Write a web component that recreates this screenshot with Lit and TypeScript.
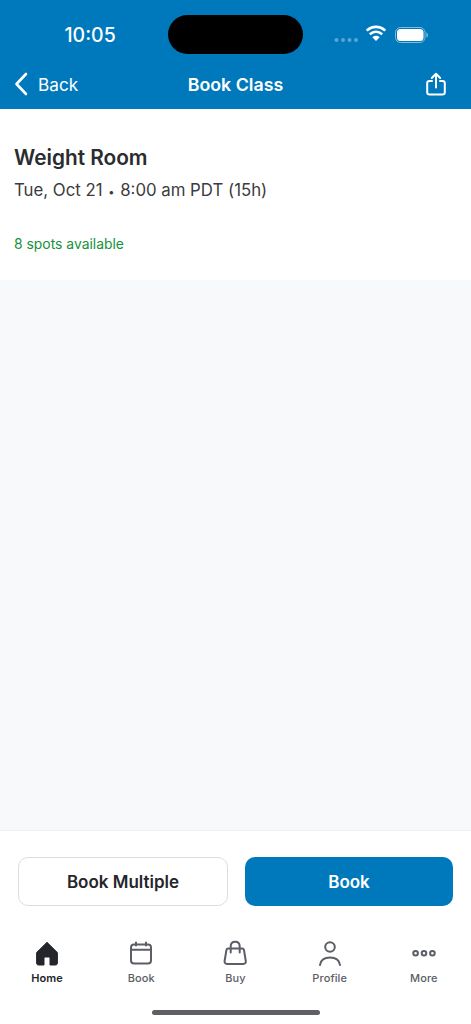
import { LitElement, css, html, svg } from 'lit'
import { customElement } from 'lit/decorators.js'
import { map } from 'lit/directives/map.js'
import { classMap } from 'lit/directives/class-map.js'

const tabs = [
    {
        label: 'Home',
        active: true,
        icon: svg`<path fill="#24262b" stroke="#24262b" stroke-width="1" stroke-linejoin="round" d="M13 2.300 2.600 12.600V23c0 1.300.7 2 2 2H10v-7c0-.7.4-1 1-1h4c.6 0 1 .3 1 1v7h5.400c1.300 0 2-.7 2-2V12.600z"/>`,
    },
    {
        label: 'Book',
        active: false,
        icon: svg`<g fill="none" stroke="#5b5e66" stroke-width="2" stroke-linecap="round"><rect x="3" y="4.500" width="20" height="19" rx="3"/><path d="M3 9.800h20M8 2.500v3M18 2.500v3"/></g>`,
    },
    {
        label: 'Buy',
        active: false,
        icon: svg`<g fill="none" stroke="#5b5e66" stroke-width="2" stroke-linejoin="round" stroke-linecap="round"><path d="M6.200 8.600h14c1 0 1.600.6 1.800 1.600l1.800 10.800c.3 1.900-.8 3-2.400 3H5c-1.600 0-2.700-1.100-2.400-3l1.800-10.800c.2-1 .8-1.600 1.800-1.600z"/><path d="M8.700 12.500V6.500c0-2.900 1.800-4.700 4.500-4.700s4.500 1.800 4.500 4.700v6"/></g>`,
    },
    {
        label: 'Profile',
        active: false,
        icon: svg`<g fill="none" stroke="#5b5e66" stroke-width="2" stroke-linecap="round"><circle cx="13" cy="7" r="4.800"/><path d="M3 25c.5-4.800 4.500-7.600 10-7.600S22.500 20.200 23 25"/></g>`,
    },
    {
        label: 'More',
        active: false,
        icon: svg`<g fill="none" stroke="#5b5e66" stroke-width="2"><circle cx="4.600" cy="13.300" r="2.300"/><circle cx="13" cy="13.300" r="2.300"/><circle cx="21.400" cy="13.300" r="2.300"/></g>`,
    },
]

@customElement('app-root')
export class AppRoot extends LitElement {
    static styles = css`
        :host {
            display: flex;
            flex-direction: column;
            width: 471px;
            height: 1024px;
            background: #fff;
            font-family: Inter, "Liberation Sans", sans-serif;
            overflow: hidden;
        }

        .top {
            height: 109px;
            box-sizing: border-box;
            background: #0079bc;
            color: #fff;
        }

        .status {
            height: 69px;
            box-sizing: border-box;
            padding-top: 15px;
            display: grid;
            grid-template-columns: 168px 135px 168px;
        }

        .time {
            font-size: 19.500px;
            font-weight: 500;
            line-height: 40px;
            padding-left: 64.500px;
        }

        .island {
            height: 39px;
            background: #000;
            border-radius: 20px;
        }

        .sys {
            display: flex;
            align-items: flex-start;
            padding-left: 31px;
        }

        .nav {
            display: grid;
            grid-template-columns: 1fr auto 1fr;
            align-items: center;
            height: 30px;
            padding: 0 25px 0 14px;
        }

        .back {
            display: flex;
            align-items: center;
            gap: 10px;
            font-size: 17.200px;
        }

        .title {
            font-size: 17.800px;
            font-weight: 600;
            margin-left: 11px;
        }

        .share {
            justify-self: end;
            display: block;
        }

        .info {
            height: 171px;
            box-sizing: border-box;
            padding: 35px 14px 0;
        }

        .name {
            font-size: 20.800px;
            font-weight: 600;
            line-height: 28px;
            color: #2b2c30;
        }

        .when {
            font-size: 16.800px;
            line-height: 24px;
            margin-top: 6px;
            color: #3a3b40;
        }

        .dot {
            font-size: 11px;
            margin: 0 1px;
        }

        .spots {
            font-size: 13.900px;
            line-height: 20px;
            margin-top: 30px;
            color: #17913c;
        }

        .gap {
            flex: 1;
            background: #f8f9fb;
        }

        .foot {
            height: 194px;
            box-sizing: border-box;
            border-top: 1px solid #f0f1f3;
            padding-top: 26px;
        }

        .btns {
            display: flex;
            gap: 17px;
            padding: 0 18px;
        }

        .btn {
            flex: 1;
            height: 49px;
            box-sizing: border-box;
            border-radius: 10px;
            display: flex;
            align-items: center;
            justify-content: center;
            font-size: 17px;
            font-weight: 600;
        }

        .ghost {
            border: 1px solid #dcdde0;
            color: #24262b;
        }

        .solid {
            background: #0079bc;
            color: #fff;
        }

        .tabs {
            display: grid;
            grid-template-columns: repeat(5, 1fr);
            margin-top: 34px;
        }

        .tab {
            display: flex;
            flex-direction: column;
            align-items: center;
            font-size: 11px;
            font-weight: 500;
            line-height: 16px;
            letter-spacing: .1px;
            color: #5b5e66;
            gap: 4px;
        }

        .tab.active {
            color: #24262b;
            font-weight: 600;
        }

        .tab svg {
            display: block;
        }

        .bar {
            width: 168px;
            height: 5px;
            margin: 24px auto 0;
            border-radius: 3px;
            background: #5f6064;
        }
    `

    private statusIcons() {
        return html`
            <svg width="100" height="40" viewBox="0 0 100 40">
                <g fill="#5aa6d4">
                    <circle cx="2.500" cy="25" r="2"/><circle cx="9" cy="25" r="2"/>
                    <circle cx="15.500" cy="25" r="2"/><circle cx="22" cy="25" r="2"/>
                </g>
                <path fill="none" stroke="#fff" stroke-width="2.600" d="M32.700 15.600c5.600-5 13-5 18.600 0M35.800 19.200c3.800-3.200 8.600-3.200 12.400 0"/>
                <path fill="#fff" d="M38.300 22.200c2.200-1.900 5.200-1.900 7.400 0L42 26z"/>
                <rect x="61.500" y="12.500" width="29.500" height="15" rx="5" fill="none" stroke="#7fbde0" stroke-width="1"/>
                <rect x="63" y="14" width="26.500" height="12" rx="3.500" fill="#fff"/>
                <path fill="#7fbde0" d="M92.300 17.500c1.200.3 1.600 1.300 1.600 2.500s-.4 2.200-1.600 2.500z"/>
            </svg>
        `
    }

    render() {
        return html`
            <div class="top">
                <div class="status">
                    <div class="time">10:05</div>
                    <div class="island"></div>
                    <div class="sys">${this.statusIcons()}</div>
                </div>
                <div class="nav">
                    <div class="back">
                        <svg width="14" height="24" viewBox="0 0 14 24">
                            <path fill="none" stroke="#fff" stroke-width="2.600" stroke-linecap="round" stroke-linejoin="round" d="M12 2 2.500 12l9.500 10"/>
                        </svg>
                        <span>Back</span>
                    </div>
                    <div class="title">Book Class</div>
                    <svg class="share" width="20" height="24" viewBox="0 0 20 24">
                        <g fill="none" stroke="#fff" stroke-width="2" stroke-linecap="round" stroke-linejoin="round">
                            <path d="M6 9H3.500C2 9 1.200 9.800 1.200 11.300v8.900c0 1.500.8 2.300 2.300 2.300h13c1.500 0 2.300-.8 2.300-2.300v-8.900C18.800 9.800 18 9 16.500 9H14"/>
                            <path d="M10 15.500V2M5.800 6 10 1.800 14.200 6"/>
                        </g>
                    </svg>
                </div>
            </div>
            <div class="info">
                <div class="name">Weight Room</div>
                <div class="when">Tue, Oct 21 <span class="dot">•</span> 8:00 am PDT (15h)</div>
                <div class="spots">8 spots available</div>
            </div>
            <div class="gap"></div>
            <div class="foot">
                <div class="btns">
                    <div class="btn ghost">Book Multiple</div>
                    <div class="btn solid">Book</div>
                </div>
                <div class="tabs">
                    ${map(tabs, (t) => html`
                        <div class="tab ${classMap({ active: t.active })}">
                            <svg width="26" height="26" viewBox="0 0 26 26">${t.icon}</svg>
                            <span>${t.label}</span>
                        </div>
                    `)}
                </div>
                <div class="bar"></div>
            </div>
        `
    }
}

declare global {
    interface HTMLElementTagNameMap {
        'app-root': AppRoot
    }
}
